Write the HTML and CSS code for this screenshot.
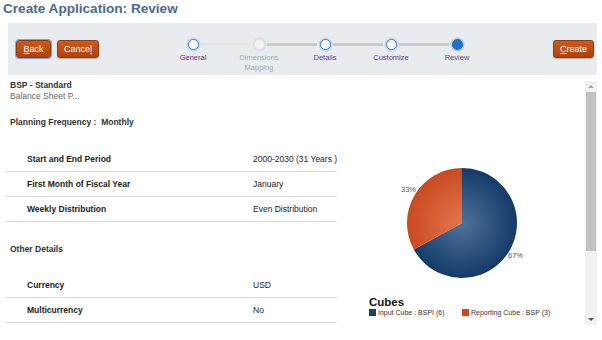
FILE: index.html
```html
<!DOCTYPE html>
<html>
<head>
<meta charset="utf-8">
<link rel="stylesheet" href="styles.css">
</head>
<body>
<h1 class="title">Create Application: Review</h1>
<div class="toolbar">
  <div class="btns">
    <button class="btn focus"><u>B</u>ack</button>
    <button class="btn cancel">Cance<u>l</u></button>
  </div>
  <div class="train">
    <div class="stop visited"><span class="dot"></span><span class="lbl">General</span></div>
    <div class="link light"></div>
    <div class="stop disabled"><span class="dot"></span><span class="lbl">Dimensions<br>Mapping</span></div>
    <div class="link"></div>
    <div class="stop visited"><span class="dot"></span><span class="lbl">Details</span></div>
    <div class="link"></div>
    <div class="stop visited"><span class="dot"></span><span class="lbl">Customize</span></div>
    <div class="link"></div>
    <div class="stop current"><span class="dot"></span><span class="lbl">Review</span></div>
  </div>
  <button class="btn create"><u>C</u>reate</button>
</div>
<div class="content">
  <div class="left">
    <div class="head">
      <div class="name">BSP - Standard</div>
      <div class="desc">Balance Sheet P...</div>
    </div>
    <div class="freq">Planning Frequency :&nbsp; Monthly</div>
    <div class="rows first">
      <div class="row"><span class="k">Start and End Period</span><span class="v">2000-2030 (31 Years )</span></div>
      <div class="row"><span class="k">First Month of Fiscal Year</span><span class="v">January</span></div>
      <div class="row"><span class="k">Weekly Distribution</span><span class="v">Even Distribution</span></div>
    </div>
    <div class="other">Other Details</div>
    <div class="rows second">
      <div class="row"><span class="k">Currency</span><span class="v">USD</span></div>
      <div class="row"><span class="k">Multicurrency</span><span class="v">No</span></div>
    </div>
  </div>
  <div class="chart">
    <svg class="pie" width="248" height="215" viewBox="0 0 248 215">
      <defs>
        <radialGradient id="gb" cx="125" cy="148" r="60" gradientUnits="userSpaceOnUse">
          <stop offset="0" stop-color="#4f7299"/>
          <stop offset="1" stop-color="#0f3563"/>
        </radialGradient>
        <radialGradient id="go" cx="125" cy="148" r="60" gradientUnits="userSpaceOnUse">
          <stop offset="0" stop-color="#e4764f"/>
          <stop offset="1" stop-color="#c7461b"/>
        </radialGradient>
      </defs>
      <path d="M125 148 L125 93 A55 55 0 1 1 76.8 174.5 Z" fill="url(#gb)"/>
      <path d="M125 148 L76.8 174.5 A55 55 0 0 1 125 93 Z" fill="url(#go)"/>
      <text x="64" y="117" class="pct">33%</text>
      <text x="171" y="183" class="pct">67%</text>
    </svg>
    <div class="legend">
      <div class="ltitle">Cubes</div>
      <div class="items">
        <span class="item"><span class="sw blue"></span>Input Cube : BSPI (6)</span>
        <span class="item"><span class="sw orange"></span>Reporting Cube : BSP (3)</span>
      </div>
    </div>
  </div>
  <div class="scroll">
    <div class="arrow up"></div>
    <div class="thumb"></div>
    <div class="track"></div>
    <div class="arrow down"></div>
  </div>
</div>
</body>
</html>
```
FILE: styles.css
```css
* { box-sizing: border-box; }
body {
  margin: 0;
  width: 602px;
  height: 340px;
  overflow: hidden;
  background: #fff;
  font-family: "Liberation Sans", Arial, sans-serif;
  color: #222;
}
.title {
  margin: 0;
  padding: 0 0 0 3px;
  height: 23px;
  line-height: 18px;
  font-size: 13.6px;
  font-weight: bold;
  color: #4a6a8a;
}
.toolbar {
  margin: 0 5px 0 8px;
  height: 52px;
  background: #e9ecee;
  display: flex;
  align-items: flex-start;
}
.btns {
  display: flex;
  gap: 6px;
  padding: 17px 0 0 8px;
}
.btn {
  height: 18px;
  padding: 0;
  border: 1px solid #8d3b0f;
  border-radius: 3px;
  background: linear-gradient(#cd5a1e, #ab430f);
  color: #fff;
  font-family: "Liberation Sans", Arial, sans-serif;
  font-size: 9px;
  line-height: 16px;
  box-shadow: 0 1px 1px rgba(0,0,0,0.25);
}
.btn.focus {
  width: 35px;
  outline: 1px solid #7ea6dc;
  box-shadow: 0 0 0 1px #aac6ee;
}
.btn.cancel { width: 42px; }
.btn.create {
  margin: 17px 3px 0 auto;
  width: 41px;
}
.train {
  display: flex;
  align-items: flex-start;
  margin: 13px 0 0 88px;
}
.stop {
  width: 12px;
  display: flex;
  flex-direction: column;
  align-items: center;
}
.dot {
  width: 11px;
  height: 11px;
  border-radius: 50%;
  background: #fff;
  border: 1.5px solid #2f7fd6;
  box-shadow: 0 0 0 1.5px #cfd2d5;
  margin-top: 3px;
}
.stop.disabled .dot {
  background: #f3f3f3;
  border-color: #e2e2e2;
  box-shadow: 0 0 0 1.5px #dcdfe1;
}
.stop.current .dot {
  background: #1e6fd0;
  border-color: #1e6fd0;
  box-shadow: 0 0 0 1.5px #c6c9cc;
}
.lbl {
  margin-top: 3px;
  font-size: 7.5px;
  line-height: 10px;
  text-align: center;
  white-space: nowrap;
  color: #7a2e8e;
}
.stop.disabled .lbl { color: #a8a8a8; }
.stop.current .lbl { color: #3e4c93; }
.link {
  width: 50px;
  height: 3px;
  margin: 7px 2px 0;
  background: #c9cbcd;
}
.link.light { background: #e2e4e6; }

.content {
  display: flex;
  height: 265px;
  margin-right: 5px;
}
.left {
  width: 337px;
  padding: 5px 0 0 5px;
  font-size: 8.5px;
}
.head { padding-left: 5px; line-height: 11px; }
.name { font-weight: bold; color: #333; }
.desc { color: #666; }
.freq {
  margin-top: 14px;
  padding-left: 5px;
  line-height: 12px;
  font-weight: bold;
  color: #333;
}
.rows.first { margin-top: 19px; }
.rows.second { margin-top: 18px; }
.row {
  height: 25px;
  border-bottom: 1px solid #dcdcdc;
  display: flex;
  align-items: center;
  padding-left: 22px;
}
.k { width: 226px; flex: none; font-weight: bold; color: #222; }
.v { color: #222; white-space: nowrap; }
.other {
  margin-top: 21px;
  padding-left: 5px;
  line-height: 12px;
  font-weight: bold;
  color: #333;
}
.chart {
  width: 248px;
  display: flex;
  flex-direction: column;
}
.pie { display: block; }
.pct { font-family: "Liberation Sans", Arial, sans-serif; font-size: 7.5px; fill: #555; }
.legend { padding: 7px 0 0 32px; }
.ltitle { font-size: 11.5px; line-height: 11px; font-weight: bold; color: #111; }
.items { display: flex; font-size: 7px; line-height: 9px; color: #333; }
.item { display: flex; align-items: center; }
.item:first-child { width: 93px; }
.sw { width: 7px; height: 7px; margin-right: 2px; }
.sw.blue { background: #1d3f6c; }
.sw.orange { background: #d2461a; }
.scroll {
  width: 12px;
  margin-top: 6px;
  height: 244px;
  background: #f1f1f1;
  display: flex;
  flex-direction: column;
  align-items: center;
}
.arrow { width: 0; height: 0; border-left: 3px solid transparent; border-right: 3px solid transparent; }
.arrow.up { border-bottom: 3px solid #a3a3a3; margin: 4px 0 4px; }
.arrow.down { border-top: 3px solid #505050; margin: 0 0 4px; }
.thumb { width: 10px; height: 159px; background: #c1c1c1; }
.track { flex: 1; }
```
